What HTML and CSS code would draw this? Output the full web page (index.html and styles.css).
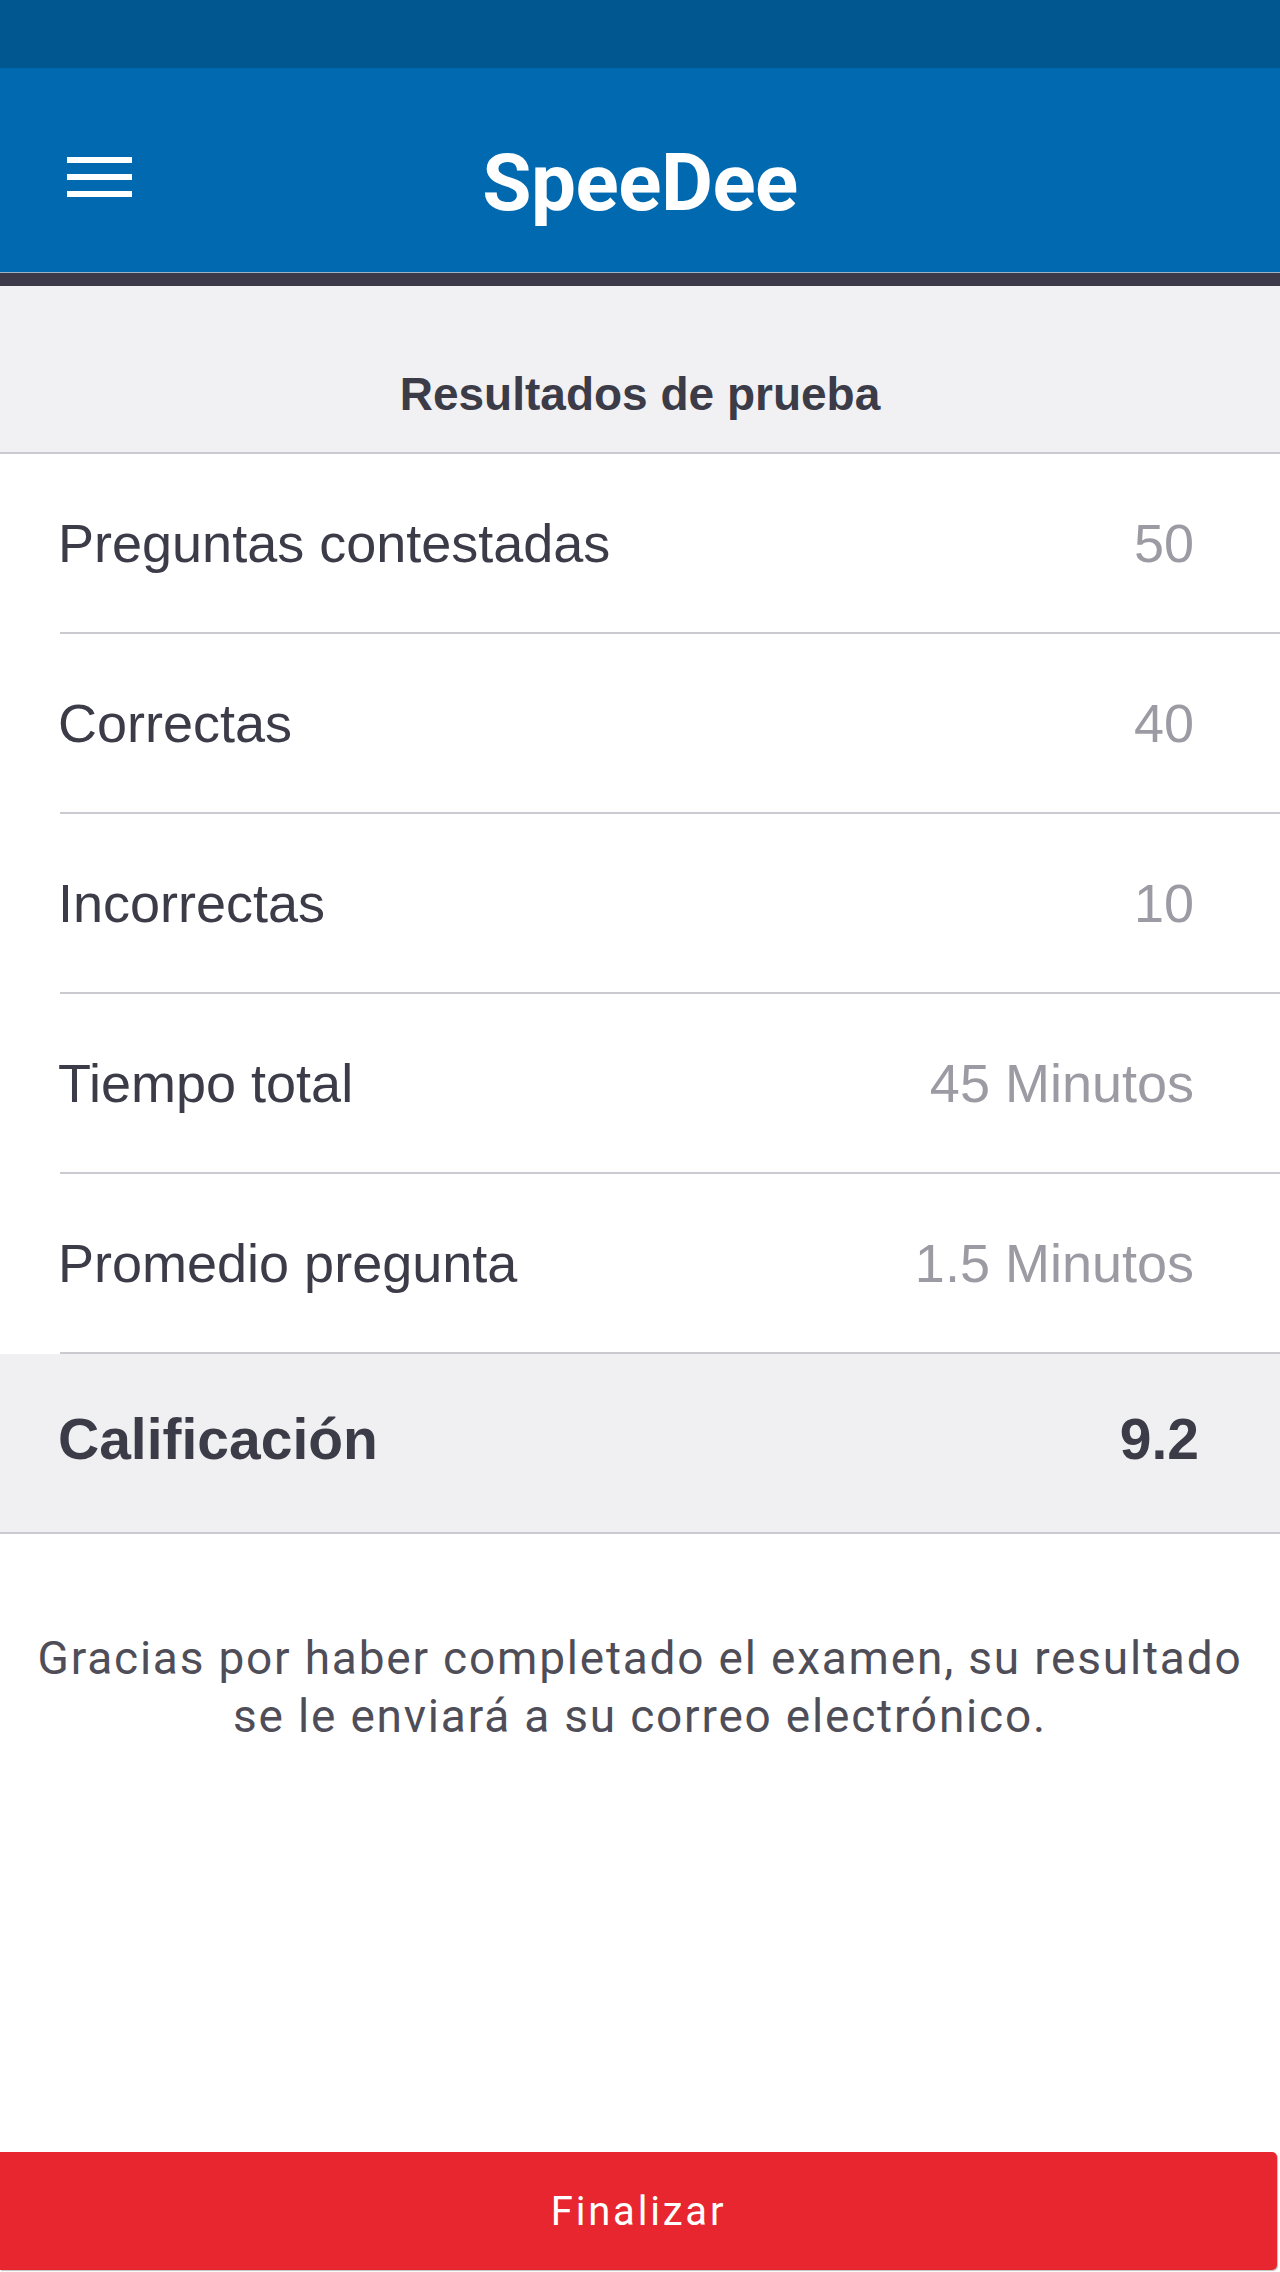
FILE: index.html
```html
<!DOCTYPE html>
<html lang="es">
<head>
<meta charset="utf-8">
<title>SpeeDee - Resultados</title>
<link rel="stylesheet" href="styles.css">
</head>
<body>
<div class="screen">
  <div class="status-bar"></div>
  <header class="app-bar">
    <button class="menu-btn" aria-label="Menú">
      <svg width="65" height="40" viewBox="0 0 65 40">
        <rect x="0" y="0" width="65" height="6" fill="#ffffff"/>
        <rect x="0" y="17" width="65" height="6" fill="#ffffff"/>
        <rect x="0" y="34" width="65" height="6" fill="#ffffff"/>
      </svg>
    </button>
    <h1 class="app-title">SpeeDee</h1>
    <div class="spacer"></div>
  </header>
  <div class="app-bar-shadow"></div>

  <section class="results-header">
    <h2 class="results-title">Resultados de prueba</h2>
  </section>

  <ul class="results-list">
    <li class="row"><span class="label">Preguntas contestadas</span><span class="value">50</span></li>
    <li class="row"><span class="label">Correctas</span><span class="value">40</span></li>
    <li class="row"><span class="label">Incorrectas</span><span class="value">10</span></li>
    <li class="row"><span class="label">Tiempo total</span><span class="value">45 Minutos</span></li>
    <li class="row"><span class="label">Promedio pregunta</span><span class="value">1.5 Minutos</span></li>
  </ul>

  <div class="score-row">
    <span class="score-label">Calificación</span>
    <span class="score-value">9.2</span>
  </div>

  <p class="thanks">Gracias por haber completado el examen, su resultado se le enviará a su correo electrónico.</p>

  <button class="finish-btn">Finalizar</button>
</div>
</body>
</html>
```

FILE: styles.css
```css
html, body {
  margin: 0;
  padding: 0;
  background: #ffffff;
}

.screen {
  width: 1280px;
  min-height: 2272px;
  display: flex;
  flex-direction: column;
  font-family: "Liberation Sans", Arial, sans-serif;
}

.status-bar {
  height: 68px;
  background: #01578f;
}

.app-bar {
  height: 205px;
  box-sizing: border-box;
  background: #0069af;
  border-bottom: 1px solid #9fb3c6;
  display: grid;
  grid-template-columns: 1fr auto 1fr;
  align-items: start;
}

.menu-btn {
  justify-self: start;
  margin: 89px 0 0 67px;
  padding: 0;
  border: 0;
  background: none;
  width: 65px;
  height: 40px;
  display: block;
}

.menu-btn svg {
  display: block;
}

.app-title {
  margin: 68px 0 0 0;
  font-family: Roboto, "Noto Sans", sans-serif;
  font-weight: 700;
  font-size: 80px;
  line-height: 94px;
  color: #ffffff;
  letter-spacing: -0.5px;
}

.app-bar-shadow {
  height: 13px;
  background: #3c3a48;
}

.results-header {
  height: 168px;
  box-sizing: border-box;
  background: #f1f1f3;
  border-bottom: 2px solid #cbcad0;
  display: flex;
  align-items: flex-end;
  justify-content: center;
  padding-bottom: 32px;
}

.results-title {
  margin: 0;
  font-size: 46px;
  font-weight: 700;
  line-height: 52px;
  color: #3c3b48;
}

.results-list {
  list-style: none;
  margin: 0;
  padding: 0;
}

.row {
  margin-left: 60px;
  height: 180px;
  box-sizing: border-box;
  border-bottom: 2px solid #cbcad0;
  padding-right: 86px;
  display: flex;
  align-items: center;
  justify-content: space-between;
  font-size: 54px;
}

.label {
  margin-left: -2px;
  color: #3c3b48;
}

.value {
  color: #9c9ba3;
}

.score-row {
  height: 180px;
  box-sizing: border-box;
  background: #f0f0f2;
  border-bottom: 2px solid #cbcad0;
  padding: 0 81px 8px 60px;
  display: flex;
  align-items: center;
  justify-content: space-between;
  font-size: 57px;
  font-weight: 700;
  color: #3c3b48;
}

.score-label {
  margin-left: -2px;
}

.thanks {
  margin: 0;
  padding: 95px 20px 0 20px;
  font-family: Roboto, "Noto Sans", sans-serif;
  font-size: 46px;
  line-height: 58px;
  letter-spacing: 1.8px;
  text-align: center;
  color: #4f4e58;
}

.finish-btn {
  margin-top: auto;
  margin-bottom: 2px;
  width: 1277px;
  height: 118px;
  border: 0;
  border-radius: 0 5px 5px 0;
  background: #e8262f;
  box-shadow: 1px 1px 1px rgba(0, 0, 0, 0.25);
  color: #ffffff;
  font-family: Roboto, "Noto Sans", sans-serif;
  font-size: 40px;
  font-weight: 400;
  letter-spacing: 2.8px;
  padding: 0;
}
```
